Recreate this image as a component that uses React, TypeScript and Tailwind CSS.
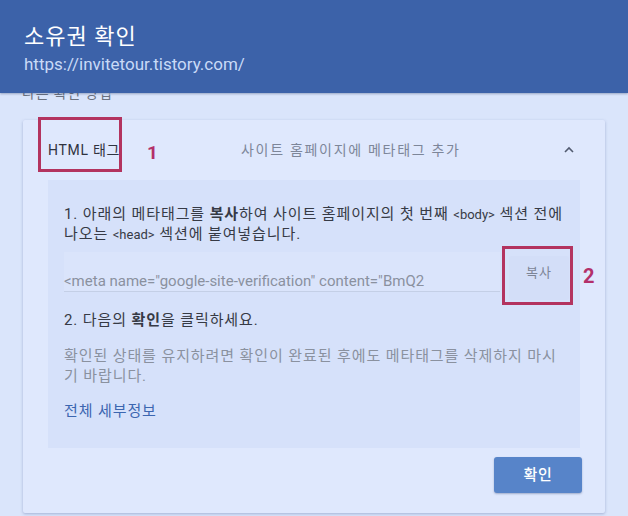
import React from 'react';

const font = { fontFamily: 'Roboto, "Noto Sans CJK KR", sans-serif' };

const App: React.FC = () => {
    return (
        <div className="h-[516px] w-[628px] overflow-hidden bg-[#dae5fb]" style={font}>
            {/* header bar */}
            <div className="relative z-10 h-[93px] bg-[#3c62a9] px-6 pt-[23px] shadow-[0_1px_2px_rgba(30,50,90,0.35)]">
                <h1 className="text-[22px] leading-[28px] tracking-[1px] text-white">소유권 확인</h1>
                <p className="mt-[2px] text-[17px] leading-[22px] text-[#c9daf7]">https://invitetour.tistory.com/</p>
            </div>

            {/* scrolled section title, cut by header */}
            <div className="h-[10px] overflow-hidden px-[22px]">
                <p className="-mt-[10px] text-[14px] leading-[20px] tracking-[0.8px] text-[#6b7280]">다른 확인 방법</p>
            </div>

            {/* card */}
            <div className="mx-[23px] mt-[17px] rounded-[2px] bg-[#dfe8fd] pb-[20px] shadow-[0_1px_3px_rgba(60,80,140,0.35)]">
                <div className="flex h-[60px] items-center px-[25px]">
                    <div className="relative w-[193px]">
                        <span className="text-[14px] tracking-[0.7px] text-[#2f3340]">HTML 태그</span>
                        <div className="absolute -left-[10px] -top-[21px] h-[55px] w-[84px] border-[3px] border-[#b3335f]" />
                        <span className="absolute left-[99px] top-[1px] text-[19px] font-bold text-[#b3306a]">1</span>
                    </div>
                    <span className="text-[14px] tracking-[1.7px] text-[#7d8699]">사이트 홈페이지에 메타태그 추가</span>
                    <svg className="ml-auto mr-[3px]" width="16" height="16" viewBox="0 0 24 24" fill="none" stroke="#525b70" strokeWidth="2.4">
                        <path d="M6 15l6-6 6 6" />
                    </svg>
                </div>

                <div className="mx-[25px] bg-[#d6e1fa] pb-[27px] pl-4 pr-[11px] pt-[24px]">
                    <p className="text-[15px] leading-[20px] tracking-[0.9px] text-[#363a45]">
                        1. 아래의 메타태그를 <b className="font-bold">복사</b>하여 사이트 홈페이지의 첫 번째 <span className="text-[13px] leading-none tracking-normal">&lt;body&gt;</span> 섹션 전에
                        나오는 <span className="text-[13px] leading-none tracking-normal">&lt;head&gt;</span> 섹션에 붙여넣습니다.
                    </p>

                    <div className="mt-[8px] flex items-end">
                        <div className="h-[40px] flex-1 border-b border-[#c4cfe6] bg-[#dae4fb] pb-[2px] pt-[17px]">
                            <span className="text-[15px] text-[#8a919f]">&lt;meta name="google-site-verification" content="BmQ2</span>
                        </div>
                        <div className="relative mb-[-8px] ml-[9px]">
                            <button className="h-[44px] w-[60px] rounded-[2px] bg-[#d3def8] pb-[10px] text-[13px] tracking-[1px] text-[#7c8496]">복사</button>
                            <div className="absolute -left-[7px] -top-[10px] h-[59px] w-[71px] border-[3px] border-[#b3335f]" />
                            <span className="absolute left-[74px] top-[5px] text-[20px] font-bold text-[#b3306a]">2</span>
                        </div>
                    </div>

                    <p className="mt-[18px] text-[15px] leading-[20px] tracking-[0.9px] text-[#363a45]">
                        2. 다음의 <b className="font-bold">확인</b>을 클릭하세요.
                    </p>
                    <p className="mt-[16px] text-[15px] leading-[20px] tracking-[0.9px] text-[#8a919f]">
                        확인된 상태를 유지하려면 확인이 완료된 후에도 메타태그를 삭제하지 마시기 바랍니다.
                    </p>
                    <p className="mt-[15px] text-[15px] leading-[20px] tracking-[0.9px] text-[#3c66b0]">전체 세부정보</p>
                </div>

                <div className="mt-[9px] flex justify-end px-[23px]">
                    <button className="h-[36px] w-[88px] rounded-[3px] bg-[#5784c9] text-[15px] font-medium tracking-[0.8px] text-white shadow-[0_1px_2px_rgba(40,60,110,0.35)]">
                        확인
                    </button>
                </div>
            </div>
        </div>
    );
};

export default App;
